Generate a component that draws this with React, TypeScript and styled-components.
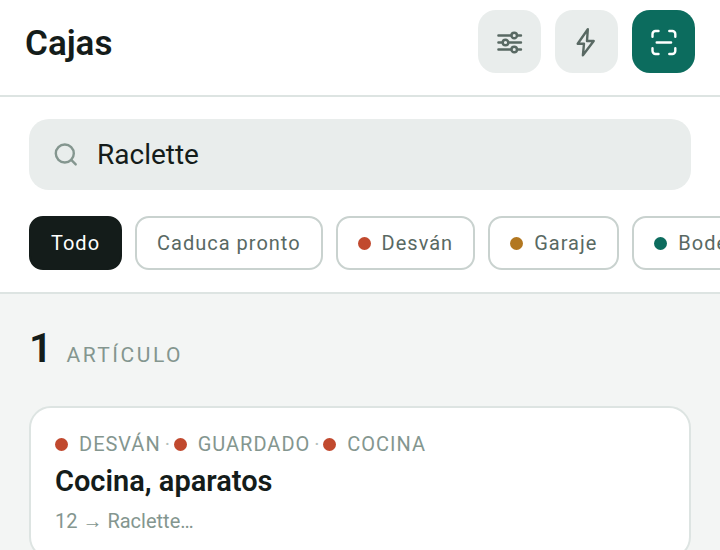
import React, { useState } from "react";
import styled, { createGlobalStyle } from "styled-components";

const GlobalStyle = createGlobalStyle`
  * { box-sizing: border-box; }
  html { background: #f3f5f4; }
  body {
    margin: 0;
    overflow-x: hidden;
    scrollbar-width: none;
    color: #141c1a;
    font-family: Roboto, "Liberation Sans", sans-serif;
  }
  html { scrollbar-width: none; }
  button, input { font: inherit; color: inherit; }
  h1, h2, p, ul { margin: 0; padding: 0; }
`;

const Header = styled.header`
  display: flex;
  align-items: center;
  justify-content: space-between;
  padding: 10px 25px 22px;
  background: #fff;
  border-bottom: 2px solid #dde4e2;
`;

const Title = styled.h1`
  padding-top: 4px;
  font-size: 35px;
  line-height: 44px;
  font-weight: 600;
`;

const Actions = styled.div`
  display: flex;
  gap: 14px;
`;

const IconButton = styled.button<{ $primary?: boolean }>`
  display: grid;
  place-items: center;
  width: 63px;
  height: 63px;
  padding: 0;
  border: 0;
  border-radius: 18px;
  background: ${(p) => (p.$primary ? "#0c6c5e" : "#e9edec")};
  color: ${(p) => (p.$primary ? "#fff" : "#596963")};
`;

const Icon = styled.svg`
  display: block;
  width: 30px;
  height: 30px;
  fill: none;
  stroke: currentColor;
  stroke-width: 2.4;
  stroke-linecap: round;
  stroke-linejoin: round;
`;

const Filters = styled.section`
  display: flex;
  flex-direction: column;
  gap: 26px;
  padding: 22px 0 22px;
  background: #fff;
  border-bottom: 2px solid #dde4e2;
`;

const SearchField = styled.label`
  display: flex;
  align-items: center;
  gap: 16px;
  height: 71px;
  margin: 0 29px;
  padding: 0 22px;
  border-radius: 20px;
  background: #e9edec;
  color: #84968f;
`;

const SearchInput = styled.input`
  flex: 1;
  min-width: 0;
  padding: 0;
  border: 0;
  outline: 0;
  background: transparent;
  color: #141c1a;
  font-size: 28px;
  line-height: 36px;
`;

const ChipRow = styled.div`
  display: flex;
  gap: 13px;
  padding: 0 29px;
  overflow-x: auto;
  scrollbar-width: none;
`;

const Chip = styled.button<{ $active?: boolean }>`
  display: flex;
  flex: none;
  align-items: center;
  gap: 11px;
  height: 54px;
  padding: 0 20px;
  border: 2px solid ${(p) => (p.$active ? "#141c1a" : "#c9d2cf")};
  border-radius: 14px;
  background: ${(p) => (p.$active ? "#141c1a" : "#fff")};
  color: ${(p) => (p.$active ? "#fff" : "#596963")};
  font-size: 20px;
  line-height: 24px;
  letter-spacing: 1px;
  white-space: nowrap;
`;

const Dot = styled.span<{ $color: string }>`
  flex: none;
  width: 13px;
  height: 13px;
  border-radius: 50%;
  background: ${(p) => p.$color};
`;

const Results = styled.main`
  padding: 30px 29px;
`;

const Count = styled.p`
  display: flex;
  align-items: baseline;
  gap: 14px;
  margin-bottom: 34px;
`;

const CountNumber = styled.strong`
  font-size: 41px;
  line-height: 48px;
  font-weight: 600;
`;

const CountLabel = styled.span`
  color: #84968f;
  font-size: 21px;
  line-height: 24px;
  letter-spacing: 0.12em;
`;

const Card = styled.article`
  padding: 24px;
  border: 2px solid #dde4e2;
  border-radius: 22px;
  background: #fff;
`;

const Path = styled.ul`
  display: flex;
  align-items: center;
  list-style: none;
  color: #84968f;
  font-size: 20px;
  line-height: 24px;
  letter-spacing: 1px;
`;

const PathItem = styled.li`
  display: flex;
  align-items: center;
  gap: 11px;
`;

const Separator = styled.li`
  width: 13px;
  padding-left: 4px;
  color: #b4c0bb;
`;

const CardTitle = styled.h2`
  margin-top: 7px;
  font-size: 29px;
  line-height: 36px;
  font-weight: 600;
`;

const CardDetail = styled.p`
  margin-top: 10px;
  color: #84968f;
  font-size: 20px;
  line-height: 24px;
`;

const RED = "#c1492e";

const chips = [
  { label: "Todo" },
  { label: "Caduca pronto" },
  { label: "Desván", color: RED },
  { label: "Garaje", color: "#b27720" },
  { label: "Bodega", color: "#0c6c5e" },
];

const path = ["DESVÁN", "GUARDADO", "COCINA"];

export default function App() {
  const [query, setQuery] = useState("Raclette");
  const [active, setActive] = useState("Todo");

  return (
    <>
      <GlobalStyle />
      <Header>
        <Title>Cajas</Title>
        <Actions>
          <IconButton aria-label="Ajustes">
            <Icon viewBox="0 0 30 30" aria-hidden="true">
              <path d="M3.4 8.5h13M22 8.5H26M3.4 15.5h4.3M13.3 15.5H26M3.4 22.5h13M22 22.5H26" />
              <circle cx="19.2" cy="8.5" r="2.8" />
              <circle cx="10.5" cy="15.5" r="2.8" />
              <circle cx="19.2" cy="22.5" r="2.8" />
            </Icon>
          </IconButton>
          <IconButton aria-label="Acciones rápidas">
            <Icon viewBox="0 0 30 30" aria-hidden="true">
              <path d="M15.8 2.3L5.7 16.7H12L10.9 28.3L21.7 14H15Z" />
            </Icon>
          </IconButton>
          <IconButton $primary aria-label="Escanear">
            <Icon viewBox="0 0 30 30" aria-hidden="true">
              <path d="M3.5 9.8V7a3 3 0 0 1 3-3h3M20.3 4h3a3 3 0 0 1 3 3v2.8M26.3 21.2V24a3 3 0 0 1-3 3h-3M9.5 27h-3a3 3 0 0 1-3-3v-2.8M7.7 15.5h14.4" />
            </Icon>
          </IconButton>
        </Actions>
      </Header>
      <Filters>
        <SearchField>
          <Icon viewBox="0 0 30 30" aria-hidden="true">
            <circle cx="13.8" cy="13.5" r="9" />
            <path d="M20.2 19.9l4.5 4.5" />
          </Icon>
          <SearchInput
            type="text"
            aria-label="Buscar"
            value={query}
            onChange={(e) => setQuery(e.target.value)}
          />
        </SearchField>
        <ChipRow>
          {chips.map(({ label, color }) => (
            <Chip
              key={label}
              $active={label === active}
              aria-pressed={label === active}
              onClick={() => setActive(label)}
            >
              {color && <Dot $color={color} />}
              {label}
            </Chip>
          ))}
        </ChipRow>
      </Filters>
      <Results>
        <Count>
          <CountNumber>1</CountNumber>
          <CountLabel>ARTÍCULO</CountLabel>
        </Count>
        <Card>
          <Path>
            {path.map((place, i) => (
              <React.Fragment key={place}>
                {i > 0 && <Separator aria-hidden="true">·</Separator>}
                <PathItem>
                  <Dot $color={RED} />
                  {place}
                </PathItem>
              </React.Fragment>
            ))}
          </Path>
          <CardTitle>Cocina, aparatos</CardTitle>
          <CardDetail>12 → Raclette…</CardDetail>
        </Card>
      </Results>
    </>
  );
}
